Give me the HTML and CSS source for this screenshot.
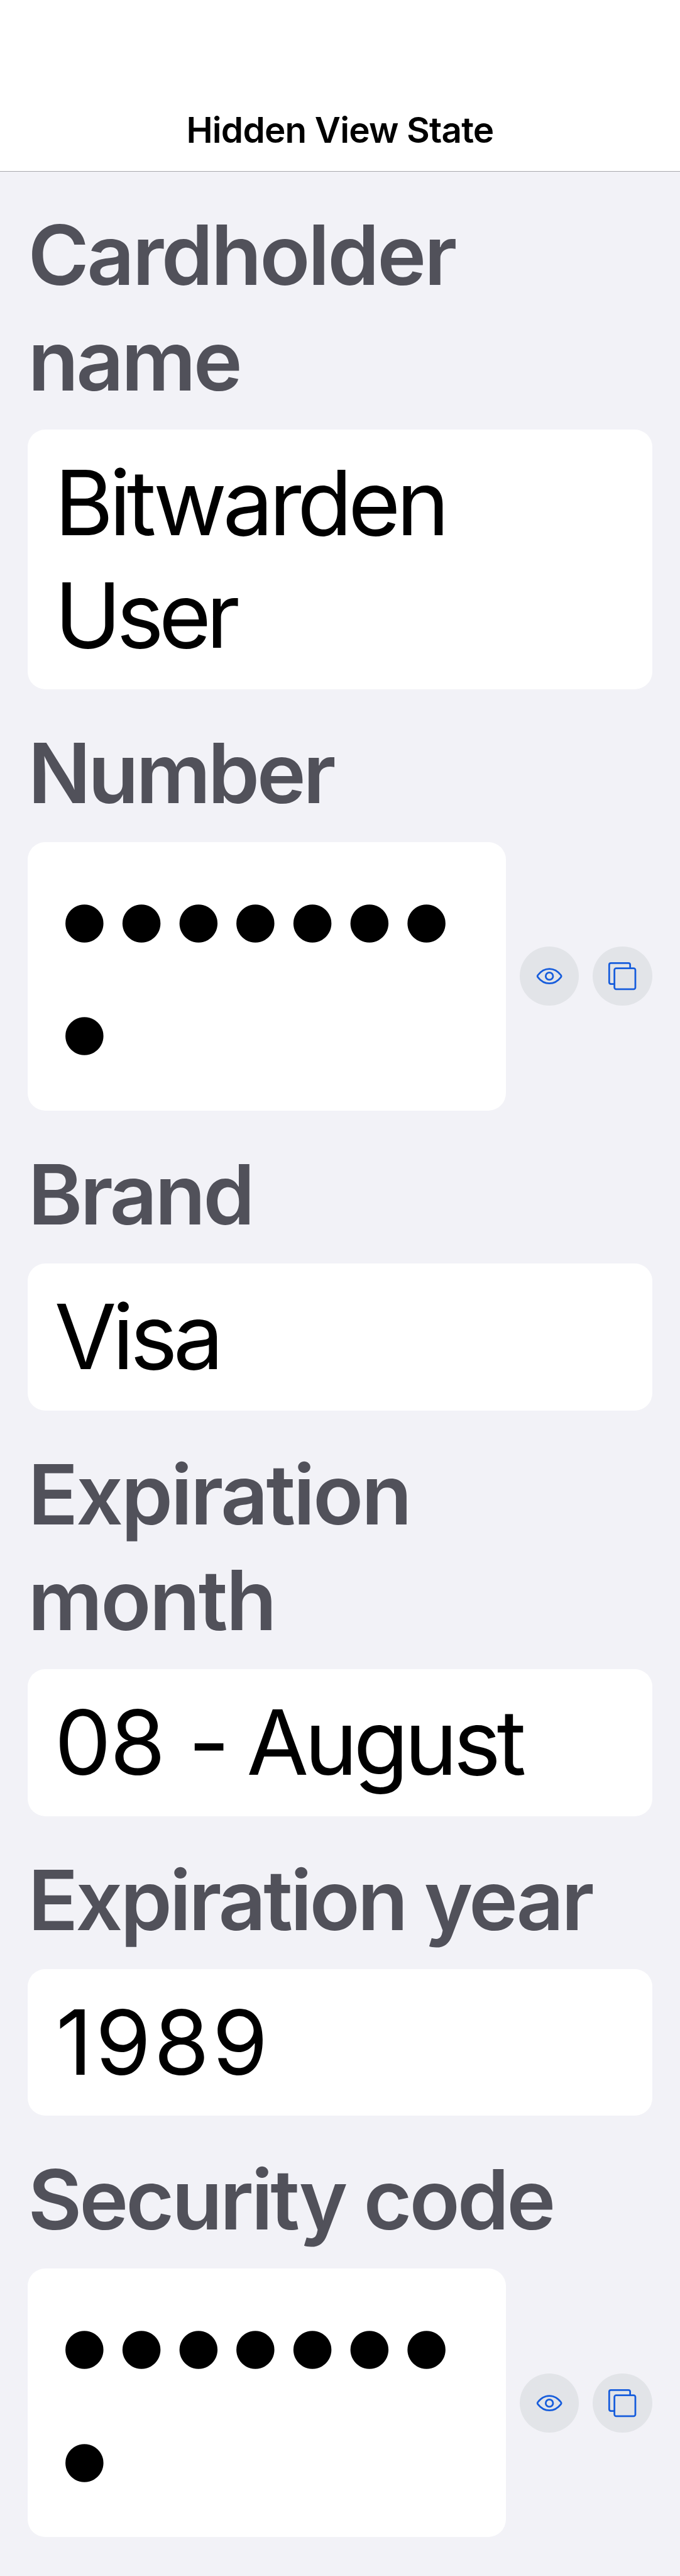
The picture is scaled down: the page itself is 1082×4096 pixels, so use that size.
FILE: index.html
```
<!DOCTYPE html>
<html lang="en">
<head>
<meta charset="utf-8">
<title>Hidden View State</title>
<link rel="stylesheet" href="styles.css">
</head>
<body>
<svg class="sprite" aria-hidden="true">
  <symbol id="icon-eye" viewBox="0 0 102 102">
    <path d="M31.2 49.2C36 43 43 38.5 51 38.5S66 43 70.8 49.2Q72.2 51 70.8 52.8C66 59 59 63.4 51 63.4S36 59 31.2 52.8Q29.8 51 31.2 49.2Z"/>
    <circle cx="51" cy="51" r="6.3"/>
  </symbol>
  <symbol id="icon-copy" viewBox="0 0 102 102">
    <path d="M37.5 64.5H31.5Q28.5 64.5 28.5 61.5V31.5Q28.5 28.5 31.5 28.5H61.5Q64.5 28.5 64.5 31.5V37.5"/>
    <rect x="37.5" y="37.5" width="36" height="36" rx="3"/>
  </symbol>
</svg>
<header class="navbar"><h1 class="navbar-title">Hidden View State</h1></header>
<main class="form">
  <section class="field">
    <h2 class="label"><span class="cardholder">Cardholder</span><br><span>name</span></h2>
    <div class="card value"><span>Bitwarden</span><br><span class="user">User</span></div>
  </section>
  <section class="field">
    <h2 class="label number">Number</h2>
    <div class="row">
      <div class="card masked">●●●●●●●●</div>
      <button class="action" aria-label="Show"><svg class="icon"><use href="#icon-eye"/></svg></button>
      <button class="action" aria-label="Copy"><svg class="icon"><use href="#icon-copy"/></svg></button>
    </div>
  </section>
  <section class="field">
    <h2 class="label">Brand</h2>
    <div class="card value">Visa</div>
  </section>
  <section class="field">
    <h2 class="label"><span class="expiration">Expiration</span><br><span class="month">month</span></h2>
    <div class="card value"><span class="month-number">08 </span>- August</div>
  </section>
  <section class="field">
    <h2 class="label">Expiration year</h2>
    <div class="card value year-value">1989</div>
  </section>
  <section class="field">
    <h2 class="label">Security code</h2>
    <div class="row">
      <div class="card masked">●●●●●●●●</div>
      <button class="action" aria-label="Show"><svg class="icon"><use href="#icon-eye"/></svg></button>
      <button class="action" aria-label="Copy"><svg class="icon"><use href="#icon-copy"/></svg></button>
    </div>
  </section>
</main>
</body>
</html>
```
FILE: styles.css
```
* { box-sizing: border-box; }

body {
  margin: 0;
  min-height: 4096px;
  background: #f2f2f7;
  color: #000;
  font-family: Inter, "Liberation Sans", sans-serif;
}

.sprite { display: none; }

.navbar {
  height: 273px;
  padding-top: 176.8px;
  background: #fff;
  border-bottom: 1px solid #a9a9ad;
  text-align: center;
}

.navbar-title {
  margin: 0;
  font-size: 56.6px;
  line-height: 60px;
  font-weight: 600;
  letter-spacing: -0.81px;
}

.form { padding: 0 44.4px; }

.field { padding-top: 49px; }

.field:first-child { padding-top: 47.5px; }

.label {
  margin: 0 0 25.9px;
  color: #51515a;
  font-size: 132px;
  line-height: 168.1px;
  font-weight: 600;
  letter-spacing: -4px;
  white-space: nowrap;
}

.cardholder { letter-spacing: -3.4px; }
.number { letter-spacing: -4.5px; }
.expiration { letter-spacing: -3.3px; }
.month { letter-spacing: -2.9px; }

.card {
  background: #fff;
  border-radius: 28px;
}

.value {
  padding: 26.4px 42.4px 28.2px;
  font-size: 143px;
  line-height: 179.3px;
  letter-spacing: -6.6px;
  white-space: nowrap;
}

.user { letter-spacing: -8px; }
.month-number { letter-spacing: -2px; }
.year-value { padding-left: 44.6px; letter-spacing: 4.5px; }

.row {
  display: flex;
  align-items: center;
  gap: 22.2px;
}

.masked {
  flex: 1;
  padding: 33px 50px 35.4px 55.4px;
  font-family: "DejaVu Sans", sans-serif;
  font-size: 79.3px;
  line-height: 179.3px;
  letter-spacing: 21.5px;
  word-break: break-all;
}

.action {
  width: 94.3px;
  height: 94.3px;
  padding: 0;
  border: 0;
  border-radius: 50%;
  background: #e2e4e8;
}

.icon {
  display: block;
  width: 100%;
  height: 100%;
  fill: none;
  stroke: #175ddc;
  stroke-width: 3;
  stroke-linecap: butt;
}
```
